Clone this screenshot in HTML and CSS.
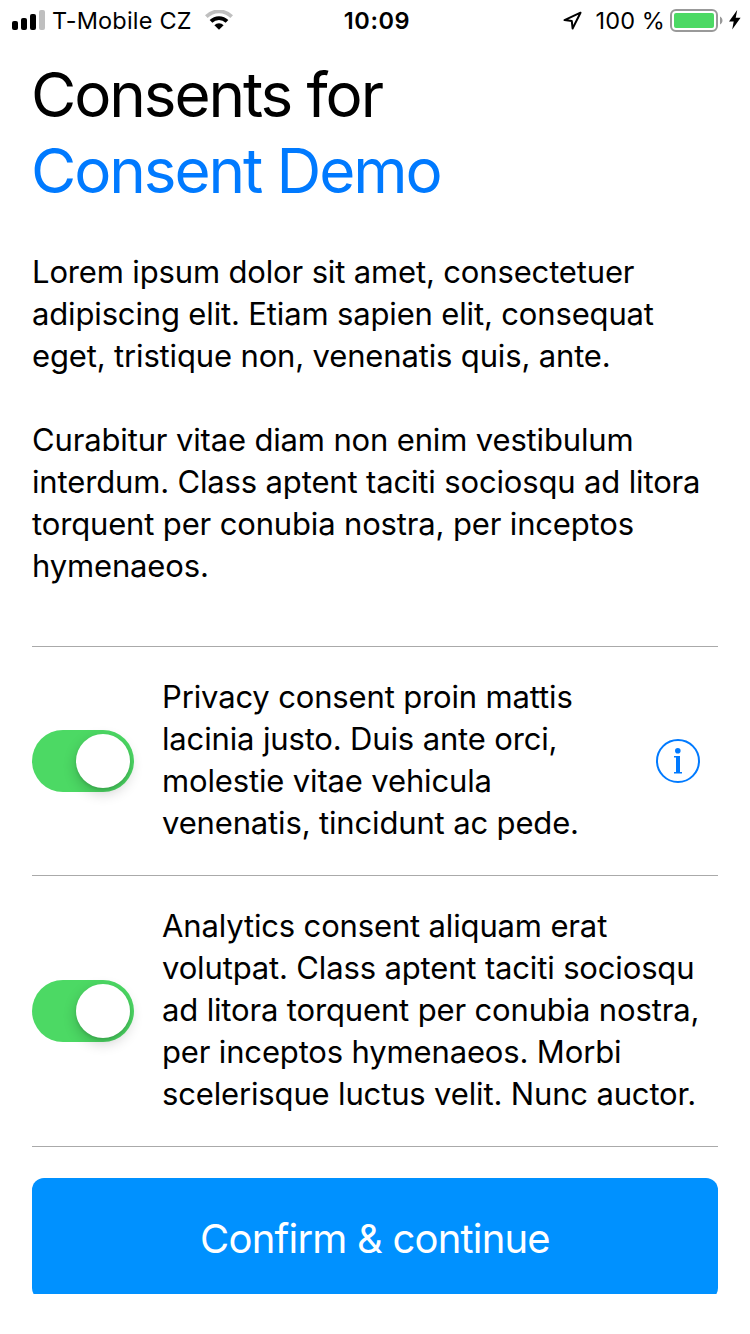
FILE: index.html
```html
<!DOCTYPE html>
<html lang="en">
<head>
<meta charset="utf-8">
<title>Consents</title>
<link rel="stylesheet" href="styles.css">
</head>
<body>
<header class="status">
  <div class="status-left">
    <svg class="signal" width="33" height="20" viewBox="0 0 33 20"><rect x="0" y="11" width="6" height="9" rx="2"/><rect x="9" y="8" width="6" height="12" rx="2"/><rect x="18" y="4" width="6" height="16" rx="2"/><rect x="27" y="0" width="6" height="20" rx="2" fill="#bfbfbf"/></svg>
    <span class="carrier">T-Mobile CZ</span>
    <svg class="wifi" width="28" height="20" viewBox="0 0 28 20" fill="none"><path d="M1.3 6.6a18 18 0 0 1 25.4 0" stroke="#bfbfbf" stroke-width="3.8"/><path d="M6 11.4a11.3 11.3 0 0 1 16 0" stroke="#000" stroke-width="3.8"/><path d="M9.4 15.2a6.5 6.5 0 0 1 9.2 0L14 19.8z" fill="#000"/></svg>
  </div>
  <time class="clock">10:09</time>
  <div class="status-right">
    <svg class="location" width="20" height="20" viewBox="0 0 20 20" fill="none" stroke="#000" stroke-width="2" stroke-linejoin="round"><path d="M17.500 2.700 1.500 10.100l7.300 1 .800 7.400z"/></svg>
    <span class="percent">100 %</span>
    <svg class="battery" width="53" height="23" viewBox="0 0 53 23"><rect x="1" y="1" width="46" height="21" rx="5" fill="none" stroke="#999" stroke-width="2"/><rect x="4" y="4" width="40" height="15" rx="2" fill="#4cd964"/><path d="M50 7.5c3.3 1.5 3.3 6.500 0 8z" fill="#999"/></svg>
    <svg class="bolt" width="12" height="20" viewBox="0 0 12 20"><path d="M8.200 0 0 11.400h4.700L3.200 19.600 11.600 7.800H6.700z"/></svg>
  </div>
</header>
<main class="page">
  <h1 class="title"><span class="line">Consents for</span><span class="line app-name">Consent Demo</span></h1>
  <div class="intro">
    <p class="copy"><span class="line">Lorem ipsum dolor sit amet, consectetuer</span><span class="line">adipiscing elit. Etiam sapien elit, consequat</span><span class="line">eget, tristique non, venenatis quis, ante.</span></p>
    <p class="copy"><span class="line">Curabitur vitae diam non enim vestibulum</span><span class="line">interdum. Class aptent taciti sociosqu ad litora</span><span class="line">torquent per conubia nostra, per inceptos</span><span class="line">hymenaeos.</span></p>
  </div>
  <section class="consents">
    <div class="consent">
      <span class="switch"><span class="knob"></span></span>
      <p class="copy"><span class="line">Privacy consent proin mattis</span><span class="line">lacinia justo. Duis ante orci,</span><span class="line">molestie vitae vehicula</span><span class="line">venenatis, tincidunt ac pede.</span></p>
      <svg class="info" width="44" height="44" viewBox="0 0 44 44" fill="#007aff"><circle cx="22" cy="22" r="21" fill="none" stroke="#007aff" stroke-width="2"/><circle cx="21.800" cy="11.700" r="2.800"/><path d="M18 17h6v16h2v1.500h-8V33h2V18.500h-2z"/></svg>
    </div>
    <div class="consent consent-long">
      <span class="switch"><span class="knob"></span></span>
      <p class="copy"><span class="line">Analytics consent aliquam erat</span><span class="line">volutpat. Class aptent taciti sociosqu</span><span class="line">ad litora torquent per conubia nostra,</span><span class="line">per inceptos hymenaeos. Morbi</span><span class="line">scelerisque luctus velit. Nunc auctor.</span></p>
    </div>
  </section>
  <div class="action"><button class="confirm" type="button">Confirm &amp; continue</button></div>
</main>
</body>
</html>
```
FILE: styles.css
```css
* { box-sizing: border-box; }
body { margin: 0; background: #fff; color: #000; font-family: Inter, "Liberation Sans", sans-serif; }
h1, p { margin: 0; font-weight: 400; }
svg { display: block; flex: none; }
.line { display: block; white-space: nowrap; }

.status { display: grid; grid-template-columns: 1fr auto 1fr; align-items: center; height: 40px; padding: 0 9px 0 12px; font-size: 23.500px; line-height: 40px; }
.status-left, .status-right { display: flex; align-items: center; }
.status-right { justify-content: flex-end; }
.carrier { margin-left: 7px; padding-top: 1px; line-height: 39px; letter-spacing: 0.200px; }
.wifi { margin-left: 13px; }
.clock { padding: 1px 0 0 1px; font-weight: 600; line-height: 39px; letter-spacing: 0.600px; }
.percent { margin: 0 5px 0 13px; padding-top: 1px; line-height: 39px; letter-spacing: 0.100px; }
.bolt { margin-left: 6px; }

.page { padding: 17px 32px 0; }
.title { margin-left: -1px; font-size: 62px; line-height: 76px; letter-spacing: -2.100px; }
.app-name { color: #007aff; }
.intro { display: flex; flex-direction: column; gap: 42px; margin-top: 42px; }
.copy { font-size: 31px; line-height: 42px; letter-spacing: -0.150px; }

.consents { margin-top: 59px; border-top: 1px solid #aaa; }
.consent { display: flex; align-items: center; height: 229px; padding-right: 18px; border-bottom: 1px solid #aaa; }
.consent-long { height: 271px; }
.consent .copy { flex: 1; margin-left: 28px; padding-bottom: 2px; }
.switch { display: flex; flex: none; justify-content: flex-end; width: 102px; height: 62px; padding: 4px; border-radius: 31px; background: #4cd964; }
.knob { width: 54px; height: 54px; border-radius: 50%; background: #fff; box-shadow: 0 5px 14px rgba(0, 0, 0, 0.2), 0 2px 3px rgba(0, 0, 0, 0.1); }

.action { height: 116px; margin-top: 31px; overflow: hidden; }
.confirm { display: block; width: 100%; height: 122px; padding: 0; border: 0; border-radius: 12px; background: #0091ff; color: #fff; font-family: inherit; font-size: 40px; font-weight: 400; line-height: 122px; letter-spacing: -0.800px; }
```
